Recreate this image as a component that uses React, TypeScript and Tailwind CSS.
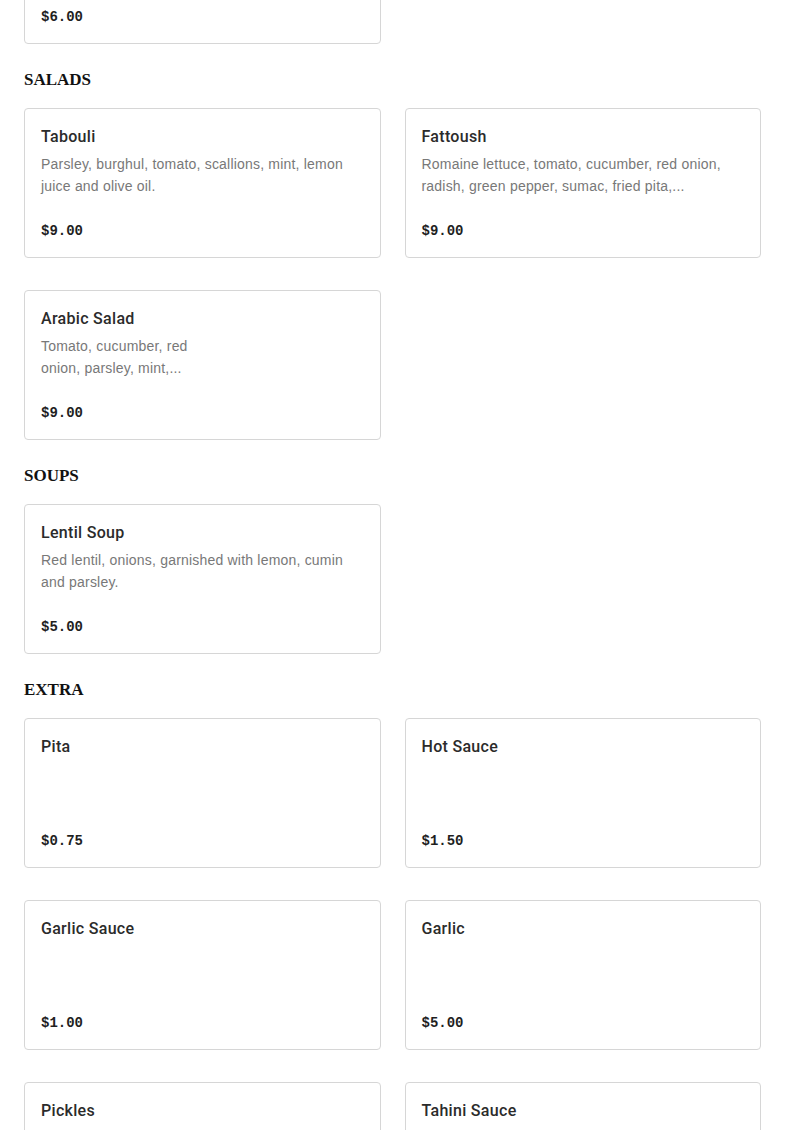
import React from "react";

type Item = { name?: string; desc?: React.ReactNode; price?: string };

const sections: { title?: string; items: Item[] }[] = [
  {
    items: [{ price: "$6.00" }],
  },
  {
    title: "SALADS",
    items: [
      { name: "Tabouli", desc: "Parsley, burghul, tomato, scallions, mint, lemon juice and olive oil.", price: "$9.00" },
      { name: "Fattoush", desc: "Romaine lettuce, tomato, cucumber, red onion, radish, green pepper, sumac, fried pita,...", price: "$9.00" },
      {
        name: "Arabic Salad",
        desc: (
          <>
            Tomato, cucumber, red
            <br />
            onion, parsley, mint,...
          </>
        ),
        price: "$9.00",
      },
    ],
  },
  {
    title: "SOUPS",
    items: [
      { name: "Lentil Soup", desc: "Red lentil, onions, garnished with lemon, cumin and parsley.", price: "$5.00" },
    ],
  },
  {
    title: "EXTRA",
    items: [
      { name: "Pita", price: "$0.75" },
      { name: "Hot Sauce", price: "$1.50" },
      { name: "Garlic Sauce", price: "$1.00" },
      { name: "Garlic", price: "$5.00" },
      { name: "Pickles" },
      { name: "Tahini Sauce" },
    ],
  },
];

function Card({ item }: { item: Item }) {
  return (
    <div className="flex h-[150px] flex-col rounded border border-[#d6d6d6] bg-white p-4">
      {item.name && (
        <div className="text-[16px] font-medium leading-6 tracking-[0.3px] text-[#2b2b2b] [font-family:Roboto,'Liberation_Sans',sans-serif]">
          {item.name}
        </div>
      )}
      {item.desc && (
        <div className="mt-1 text-[14px] leading-[22px] tracking-[0.2px] text-[#787878] [font-family:'Liberation_Sans',Arial,sans-serif]">
          {item.desc}
        </div>
      )}
      {item.price && (
        <div className="mt-auto text-[14px] font-bold leading-5 text-[#1f1f1f] [font-family:'Liberation_Mono',monospace]">
          {item.price}
        </div>
      )}
    </div>
  );
}

export default function App() {
  return (
    <div className="h-[1130px] w-[785px] overflow-hidden bg-white">
      <div className="-mt-[106px] px-6">
        {sections.map((s, i) => (
          <section key={i} className={i === 0 ? "" : "mt-6"}>
            {s.title && (
              <h2 className="mb-4 text-[17px] font-bold leading-6 text-[#111] [font-family:'Liberation_Serif',serif]">
                {s.title}
              </h2>
            )}
            <div className="grid grid-cols-2 gap-x-6 gap-y-8">
              {s.items.map((it, j) => (
                <Card key={j} item={it} />
              ))}
            </div>
          </section>
        ))}
      </div>
    </div>
  );
}
